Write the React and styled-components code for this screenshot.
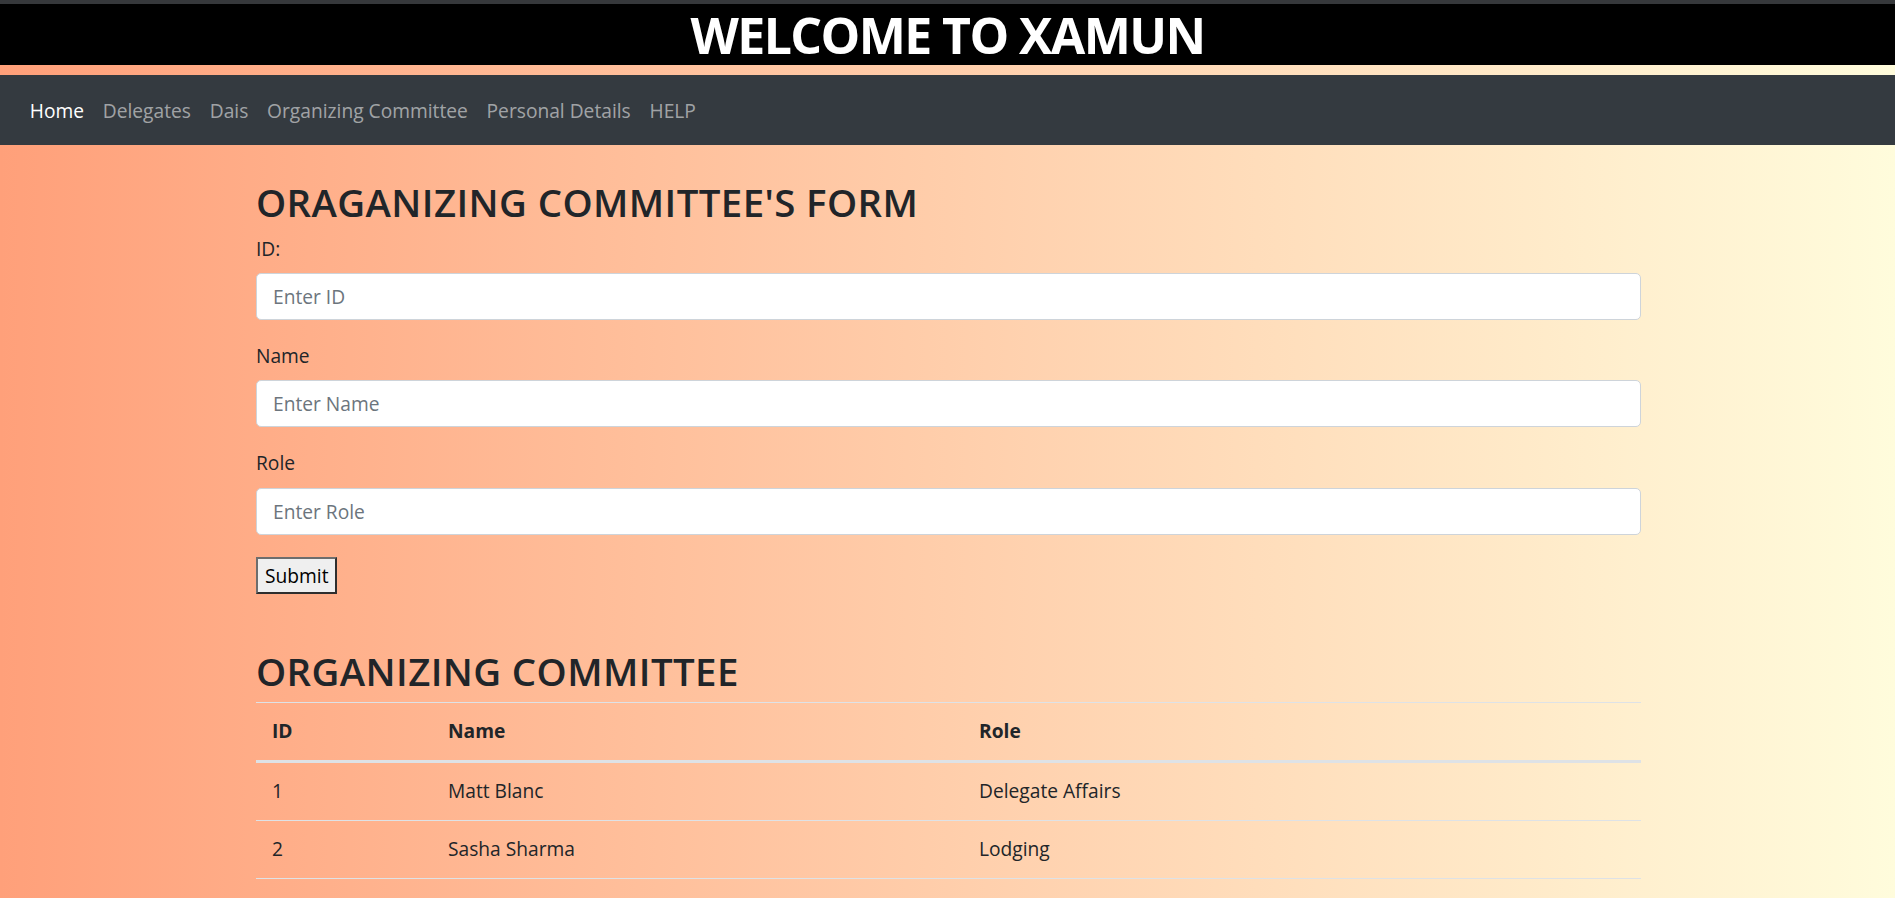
import React from "react";
import styled, { createGlobalStyle } from "styled-components";

const GlobalStyle = createGlobalStyle`
  html, body { margin: 0; padding: 0; }
  body {
    min-height: 100vh;
    font-family: "Open Sans", "Noto Sans", sans-serif;
    font-size: 19.2px;
    line-height: 1.5;
    color: #212529;
    background: linear-gradient(to right, #ffa07a 0%, #fffcdc 100%);
  }
  * { box-sizing: border-box; }
`;

const TopEdge = styled.div`
  height: 4px;
  background: #36383b;
`;

const Banner = styled.header`
  background: #000;
  height: 61px;
  margin-bottom: 10px;
  display: flex;
  justify-content: center;
`;

const BannerTitle = styled.h1`
  margin: 0;
  color: #fff;
  font-size: 50px;
  font-weight: 700;
  line-height: 63px;
  letter-spacing: -1.6px;
`;

const NavBar = styled.nav`
  background: #343a40;
  height: 70px;
  display: flex;
  align-items: center;
  padding: 2px 0 0 20.4px;
`;

const NavLink = styled.a`
  padding: 0 9.4px;
  font-size: 19.2px;
  line-height: 28.8px;
  text-decoration: none;
  color: ${(p) => (p.$active ? "#ffffff" : "rgba(255,255,255,0.55)")};
  cursor: pointer;
`;

const Container = styled.main`
  width: 1387px;
  margin: 0 auto;
  padding-top: 34px;
  padding-left: 2px;
`;

const Heading = styled.h2`
  margin: ${(p) => (p.$spaced ? "54px" : "0")} 0 ${(p) => (p.$tight ? "8px" : "9.6px")};
  font-size: 38.4px;
  font-weight: 600;
  line-height: 1.2;
  letter-spacing: 0.4px;
  color: #212529;
`;

const Form = styled.form`
  display: flex;
  flex-direction: column;
  align-items: flex-start;
`;

const Group = styled.div`
  width: 100%;
  margin-bottom: 22px;
`;

const Label = styled.label`
  display: block;
  margin-bottom: 9.6px;
  line-height: 28.8px;
`;

const Input = styled.input`
  display: block;
  width: 100%;
  height: 47px;
  padding: 0 16px;
  font-family: inherit;
  font-size: 19.2px;
  color: #495057;
  background: #fff;
  border: 1px solid #ced4da;
  border-radius: 5px;
  outline: none;
  &::placeholder { color: #6c757d; }
`;

const SubmitButton = styled.button`
  height: 37px;
  padding: 0 7px;
  font-family: inherit;
  font-size: 19.2px;
  line-height: 1;
  color: #000;
  background: #efefef;
  border-style: solid;
  border-width: 2px;
  border-color: #6d6d6d #2e2e2e #2e2e2e #6d6d6d;
  border-radius: 0;
`;

const Table = styled.table`
  width: 100%;
  border-collapse: collapse;
`;

const HeadCell = styled.th`
  width: ${(p) => p.$w || "auto"};
  text-align: left;
  font-weight: 700;
  padding: 14.4px 16px 14px;
  line-height: 28.8px;
  border-top: 1px solid #dee2e6;
  border-bottom: 3px solid #dee2e6;
`;

const Cell = styled.td`
  padding: 14px 16px;
  line-height: 28.8px;
  border-bottom: 1px solid #dee2e6;
`;

const navItems = ["Home", "Delegates", "Dais", "Organizing Committee", "Personal Details", "HELP"];

const members = [
  { id: 1, name: "Matt Blanc", role: "Delegate Affairs" },
  { id: 2, name: "Sasha Sharma", role: "Lodging" },
];

export default function App() {
  return (
    <>
      <GlobalStyle />
      <TopEdge />
      <Banner>
        <BannerTitle>WELCOME TO XAMUN</BannerTitle>
      </Banner>
      <NavBar>
        {navItems.map((item, i) => (
          <NavLink key={item} $active={i === 0}>
            {item}
          </NavLink>
        ))}
      </NavBar>
      <Container>
        <Heading>ORAGANIZING COMMITTEE'S FORM</Heading>
        <Form onSubmit={(e) => e.preventDefault()}>
          <Group>
            <Label>ID:</Label>
            <Input placeholder="Enter ID" />
          </Group>
          <Group>
            <Label>Name</Label>
            <Input placeholder="Enter Name" />
          </Group>
          <Group>
            <Label>Role</Label>
            <Input placeholder="Enter Role" />
          </Group>
          <SubmitButton type="submit">Submit</SubmitButton>
        </Form>
        <Heading $spaced $tight>ORGANIZING COMMITTEE</Heading>
        <Table>
          <thead>
            <tr>
              <HeadCell $w="176px">ID</HeadCell>
              <HeadCell $w="531px">Name</HeadCell>
              <HeadCell>Role</HeadCell>
            </tr>
          </thead>
          <tbody>
            {members.map((m) => (
              <tr key={m.id}>
                <Cell>{m.id}</Cell>
                <Cell>{m.name}</Cell>
                <Cell>{m.role}</Cell>
              </tr>
            ))}
          </tbody>
        </Table>
      </Container>
    </>
  );
}
